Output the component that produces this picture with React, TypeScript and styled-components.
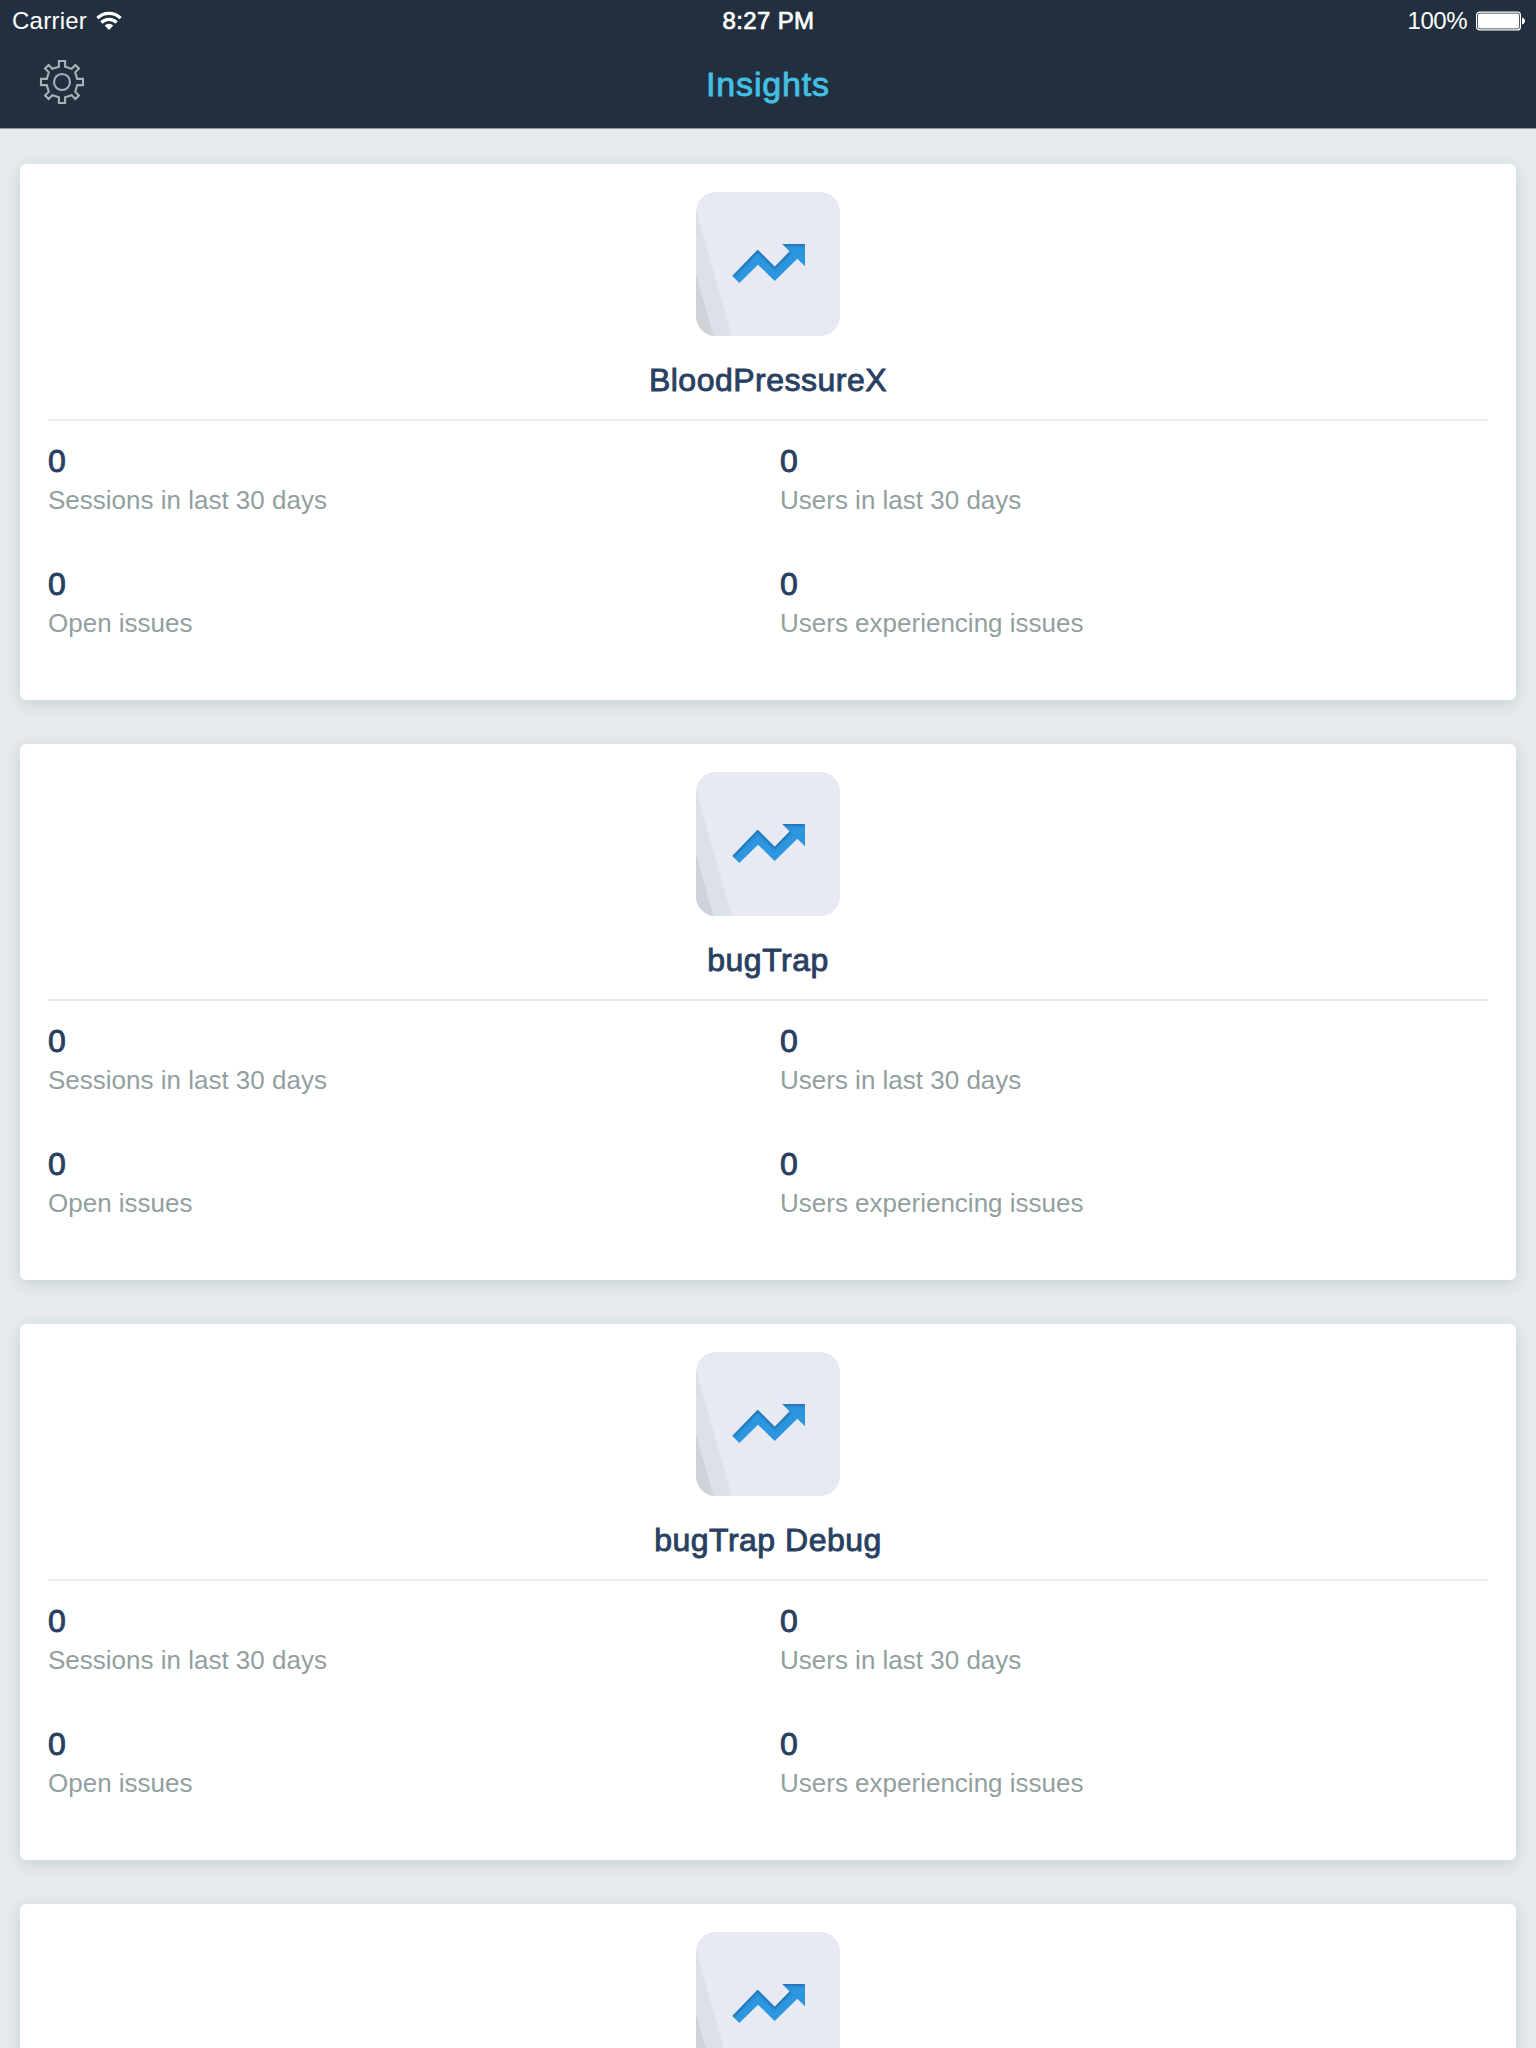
import React from "react";
import styled, { createGlobalStyle } from "styled-components";

const GlobalStyle = createGlobalStyle`
  * { box-sizing: border-box; }
  body {
    margin: 0;
    background: #e6ebee;
    font-family: "Liberation Sans", Arial, sans-serif;
  }
`;

const Screen = styled.div`
  height: 2048px;
  overflow: hidden;
  background: #e6ebee;
`;

const Header = styled.header`
  height: 129px;
  background: #222f3e;
  border-bottom: 1px solid #8f979d;
`;

const StatusBar = styled.div`
  display: grid;
  grid-template-columns: 1fr auto 1fr;
  height: 41px;
  padding: 0 11px 0 12px;
  align-items: center;
  color: #fff;
  font-size: 24px;
  line-height: 41px;
`;

const StatusGroup = styled.div<{ $end?: boolean }>`
  display: flex;
  align-items: center;
  justify-content: ${(p) => (p.$end ? "flex-end" : "flex-start")};
  gap: 9px;
  letter-spacing: ${(p) => (p.$end ? "-0.5px" : "0.25px")};
`;

const Clock = styled.div`
  letter-spacing: 0.35px;
  -webkit-text-stroke: 0.7px currentColor;
`;

const NavBar = styled.div`
  display: grid;
  grid-template-columns: 1fr auto 1fr;
  align-items: start;
  height: 87px;
  padding: 0 39px;
`;

const IconButton = styled.button`
  width: 46px;
  height: 46px;
  margin-top: 18px;
  padding: 0;
  border: 0;
  background: none;

  svg { display: block; }
`;

const Title = styled.h1`
  margin: 23px 0 0;
  color: #44bfe3;
  font-size: 34px;
  line-height: 40px;
  font-weight: 400;
  letter-spacing: 0.85px;
  -webkit-text-stroke: 0.9px currentColor;
`;

const List = styled.main`
  display: flex;
  flex-direction: column;
  gap: 44px;
  padding: 35px 20px 0;
`;

const Card = styled.article`
  display: flex;
  flex: none;
  flex-direction: column;
  align-items: center;
  height: 536px;
  padding: 28px 28px 0;
  border-radius: 6px;
  background: #fff;
  box-shadow: 0 4px 16px rgba(130, 145, 145, 0.3);
`;

const AppIcon = styled.div`
  width: 144px;
  height: 144px;
  border-radius: 20px;
  overflow: hidden;

  svg { display: block; }
`;

const AppName = styled.h2`
  margin: 24px 0 0;
  color: #294061;
  font-size: 32px;
  line-height: 40px;
  font-weight: 400;
  letter-spacing: 0.5px;
  -webkit-text-stroke: 0.9px currentColor;
`;

const Stats = styled.dl`
  display: grid;
  grid-template-columns: 1fr 1fr;
  column-gap: 24px;
  row-gap: 48px;
  width: 100%;
  margin: 19px 0 0;
  padding-top: 20px;
  border-top: 2px solid #e6ebee;
`;

const Stat = styled.div`
  display: flex;
  flex-direction: column-reverse;
  height: 75px;
`;

const StatValue = styled.dd`
  margin: 0;
  height: 43px;
  color: #294061;
  font-size: 32px;
  line-height: 40px;
  -webkit-text-stroke: 0.9px currentColor;
`;

const StatLabel = styled.dt`
  height: 32px;
  color: #929f9f;
  font-size: 26px;
  line-height: 32px;
`;

const WifiIcon = () => (
  <svg width="26" height="20" viewBox="0 0 26 20" fill="none" stroke="#fff" strokeWidth="3.2">
    <path d="M1.4 7.2a16.4 16.4 0 0 1 23.2 0" />
    <path d="M5.4 11.6a10.7 10.7 0 0 1 15.2 0" />
    <path d="M13 19l-4.3-4.4a6.1 6.1 0 0 1 8.6 0z" fill="#fff" stroke="none" />
  </svg>
);

const BatteryIcon = () => (
  <svg width="49" height="20" viewBox="0 0 49 20">
    <rect x="0.6" y="1.1" width="43.8" height="17.8" rx="3" fill="none" stroke="#fff" strokeWidth="1.2" />
    <rect x="2" y="2.5" width="41" height="15" rx="1.5" fill="#fff" />
    <path d="M46 6.5c2 .7 3 1.9 3 3.5s-1 2.8-3 3.5z" fill="#fff" />
  </svg>
);

// Four straight and four narrower diagonal teeth around a ring.
const gearPoints = Array.from({ length: 8 }, (_, i) => {
  const angle = (i * Math.PI) / 4;
  const half = i % 2 ? 2.5 : 3.1;
  const base = i % 2 ? 16.2 : 15.2;
  const tip = i % 2 ? 21.5 : 21;
  return [
    [-half, -base],
    [-half, -tip],
    [half, -tip],
    [half, -base],
  ]
    .map(([x, y]) => [
      23 + x * Math.cos(angle) - y * Math.sin(angle),
      23 + x * Math.sin(angle) + y * Math.cos(angle),
    ])
    .map((p) => p.map((n) => n.toFixed(2)).join(","))
    .join(" ");
}).join(" ");

const GearIcon = () => (
  <svg width="46" height="46" viewBox="0 0 46 46" fill="none" stroke="#a9b0b7" strokeWidth="2.1">
    <polygon points={gearPoints} />
    <circle cx="23" cy="23" r="8" />
  </svg>
);

const arrow =
  "36.3,84 61.7,57.7 78.7,74.7 93.6,59.5 86.3,52 109,52 109,74.3 101.3,66.7 78.7,89 62,72.7 43.3,91";

const TrendIcon = ({ id }: { id: string }) => (
  <svg width="144" height="144" viewBox="0 0 144 144">
    <defs>
      <clipPath id={`${id}-clip`}>
        <polygon points={arrow} />
      </clipPath>
      <filter id={`${id}-soft`} x="-10%" y="-20%" width="120%" height="150%">
        <feGaussianBlur stdDeviation="1" />
      </filter>
    </defs>
    <rect width="144" height="144" fill="#e7eaf2" />
    <polygon points="0,18 35.7,144 0,144" fill="#dce0e7" />
    <polygon points="0,82 17.5,144 0,144" fill="#ced3d9" />
    <polygon points={arrow} fill="#2d96e0" />
    <g clipPath={`url(#${id}-clip)`}>
      <path
        d="M36.3 84L61.7 57.7l17 17 14.9-15.2M86.3 52H109"
        fill="none"
        stroke="#206ca5"
        strokeOpacity="0.8"
        strokeWidth="4"
        filter={`url(#${id}-soft)`}
      />
    </g>
  </svg>
);

const metrics = [
  "Sessions in last 30 days",
  "Users in last 30 days",
  "Open issues",
  "Users experiencing issues",
];

const apps = ["BloodPressureX", "bugTrap", "bugTrap Debug", ""];

export default function App() {
  return (
    <>
      <GlobalStyle />
      <Screen>
        <Header>
          <StatusBar>
            <StatusGroup>
              Carrier
              <WifiIcon />
            </StatusGroup>
            <Clock>8:27 PM</Clock>
            <StatusGroup $end>
              100%
              <BatteryIcon />
            </StatusGroup>
          </StatusBar>
          <NavBar>
            <IconButton aria-label="Settings">
              <GearIcon />
            </IconButton>
            <Title>Insights</Title>
          </NavBar>
        </Header>
        <List>
          {apps.map((name, i) => (
            <Card key={i}>
              <AppIcon>
                <TrendIcon id={`trend-${i}`} />
              </AppIcon>
              {name && (
                <>
                  <AppName>{name}</AppName>
                  <Stats>
                    {metrics.map((label) => (
                      <Stat key={label}>
                        <StatLabel>{label}</StatLabel>
                        <StatValue>0</StatValue>
                      </Stat>
                    ))}
                  </Stats>
                </>
              )}
            </Card>
          ))}
        </List>
      </Screen>
    </>
  );
}
